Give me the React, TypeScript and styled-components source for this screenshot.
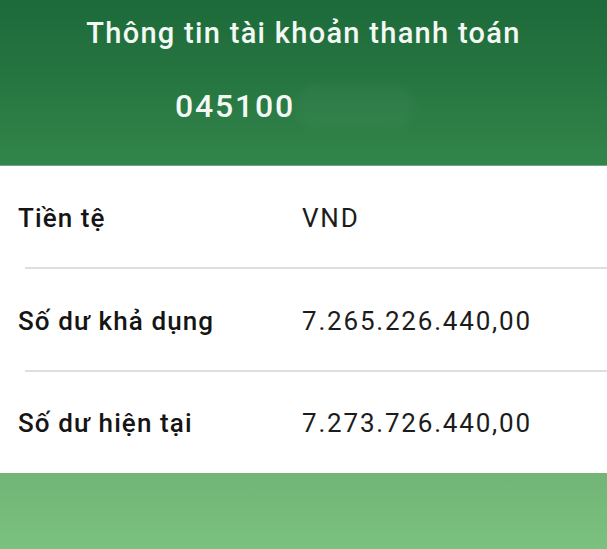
import React from 'react';
import styled, { createGlobalStyle } from 'styled-components';

const GlobalStyle = createGlobalStyle`
  html, body {
    margin: 0;
    padding: 0;
    background: #ffffff;
  }
  body {
    font-family: Roboto, "Liberation Sans", Arial, sans-serif;
    -webkit-font-smoothing: antialiased;
  }
`;

const Screen = styled.div`
  width: 607px;
  height: 549px;
  display: flex;
  flex-direction: column;
  overflow: hidden;
`;

const Header = styled.header`
  height: 165px;
  flex-shrink: 0;
  background: linear-gradient(180deg, #1d6a3a 0%, #267641 50%, #32854a 100%);
  border-bottom: 1px solid #6fa580;
  display: flex;
  flex-direction: column;
  align-items: center;
  color: #f4f8f4;
`;

const Title = styled.h1`
  margin: 15px 0 0;
  font-size: 29px;
  line-height: 36px;
  font-weight: 500;
  letter-spacing: 1.3px;
`;

const AccountRow = styled.div`
  align-self: flex-start;
  margin: 33px 0 0 175px;
  display: flex;
  align-items: center;
`;

const AccountNumber = styled.span`
  font-size: 32px;
  line-height: 38px;
  font-weight: 500;
  letter-spacing: 1.8px;
`;

const Redacted = styled.span`
  width: 120px;
  height: 44px;
  border-radius: 22px;
  background: rgba(255, 255, 255, 0.03);
  filter: blur(4px);
`;

const List = styled.section`
  background: #ffffff;
  display: flex;
  flex-direction: column;
`;

const Row = styled.div<{ $last?: boolean }>`
  height: ${(p) => (p.$last ? '101px' : '103px')};
  display: flex;
  align-items: center;
  position: relative;
  &::after {
    content: '';
    display: ${(p) => (p.$last ? 'none' : 'block')};
    position: absolute;
    left: 25px;
    right: 0;
    bottom: 0;
    height: 2px;
    background: #dedede;
  }
`;

const Label = styled.span`
  width: 284px;
  padding-left: 18px;
  font-size: 26px;
  font-weight: 500;
  letter-spacing: 1.1px;
  color: #151515;
`;

const Value = styled.span`
  font-size: 26px;
  font-weight: 400;
  letter-spacing: 1.8px;
  color: #1c1c1c;
`;

const Footer = styled.footer`
  flex: 1;
  background: linear-gradient(180deg, #72b577 0%, #7bc17e 100%);
`;

const rows = [
  { label: 'Tiền tệ', value: 'VND' },
  { label: 'Số dư khả dụng', value: '7.265.226.440,00' },
  { label: 'Số dư hiện tại', value: '7.273.726.440,00' },
];

export default function App() {
  return (
    <>
      <GlobalStyle />
      <Screen>
        <Header>
          <Title>Thông tin tài khoản thanh toán</Title>
          <AccountRow>
            <AccountNumber>045100</AccountNumber>
            <Redacted />
          </AccountRow>
        </Header>
        <List>
          {rows.map((r, i) => (
            <Row key={r.label} $last={i === rows.length - 1}>
              <Label>{r.label}</Label>
              <Value>{r.value}</Value>
            </Row>
          ))}
        </List>
        <Footer />
      </Screen>
    </>
  );
}
